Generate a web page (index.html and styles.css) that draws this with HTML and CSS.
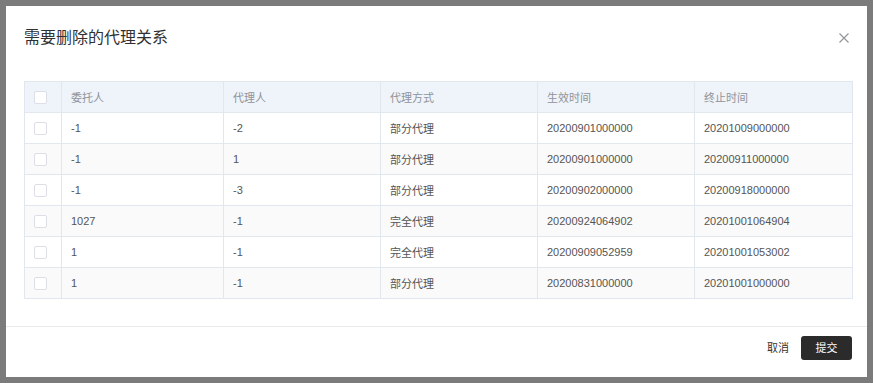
FILE: index.html
```html
<!DOCTYPE html>
<html>
<head>
    <title>需要删除的代理关系</title>
    <link rel="stylesheet" href="styles.css">
</head>
<body>
    <div class="mask">
        <div class="dialog">
            <div class="dialog-header">
                <span class="dialog-title">需要删除的代理关系</span>
                <button class="dialog-close" aria-label="Close">
                    <svg width="10" height="10" viewBox="0 0 10 10"><path d="M0.5 0.5L9.5 9.5M9.5 0.5L0.5 9.5" stroke="#909399" stroke-width="1.1" fill="none"/></svg>
                </button>
            </div>
            <div class="dialog-body">
                <table class="agent-table">
                    <colgroup>
                        <col style="width:37px">
                        <col style="width:162px">
                        <col style="width:157px">
                        <col style="width:157px">
                        <col style="width:157px">
                        <col style="width:158px">
                    </colgroup>
                    <thead>
                        <tr>
                            <th><span class="checkbox"></span></th>
                            <th>委托人</th>
                            <th>代理人</th>
                            <th>代理方式</th>
                            <th>生效时间</th>
                            <th>终止时间</th>
                        </tr>
                    </thead>
                    <tbody>
                        <tr>
                            <td><span class="checkbox"></span></td>
                            <td>-1</td><td>-2</td><td>部分代理</td>
                            <td>20200901000000</td><td>20201009000000</td>
                        </tr>
                        <tr>
                            <td><span class="checkbox"></span></td>
                            <td>-1</td><td>1</td><td>部分代理</td>
                            <td>20200901000000</td><td>20200911000000</td>
                        </tr>
                        <tr>
                            <td><span class="checkbox"></span></td>
                            <td>-1</td><td>-3</td><td>部分代理</td>
                            <td>20200902000000</td><td>20200918000000</td>
                        </tr>
                        <tr>
                            <td><span class="checkbox"></span></td>
                            <td>1027</td><td>-1</td><td>完全代理</td>
                            <td>20200924064902</td><td>20201001064904</td>
                        </tr>
                        <tr>
                            <td><span class="checkbox"></span></td>
                            <td>1</td><td>-1</td><td>完全代理</td>
                            <td>20200909052959</td><td>20201001053002</td>
                        </tr>
                        <tr>
                            <td><span class="checkbox"></span></td>
                            <td>1</td><td>-1</td><td>部分代理</td>
                            <td>20200831000000</td><td>20201001000000</td>
                        </tr>
                    </tbody>
                </table>
            </div>
            <div class="dialog-footer">
                <button class="btn btn-text">取消</button>
                <button class="btn btn-dark">提交</button>
            </div>
        </div>
    </div>
</body>
</html>
```

FILE: styles.css
```css
html, body {
    margin: 0;
    padding: 0;
    height: 100%;
}
body {
    font-family: "Liberation Sans", "Noto Sans CJK SC", sans-serif;
    background: #7b7b7b;
    color: #555;
}
.mask {
    padding: 6px;
    box-sizing: border-box;
    height: 100%;
}
.dialog {
    width: 861px;
    height: 371px;
    background: #fff;
    box-sizing: border-box;
    display: flex;
    flex-direction: column;
}
.dialog-header {
    display: flex;
    justify-content: space-between;
    align-items: center;
    padding: 20px 18px 0 18px;
    height: 24px;
}
.dialog-title {
    font-size: 16px;
    line-height: 24px;
    color: #303133;
}
.dialog-close {
    border: none;
    background: none;
    padding: 0;
    width: 10px;
    height: 10px;
    display: flex;
    cursor: pointer;
}
.dialog-body {
    padding: 31px 15px 0 18px;
    flex: 1;
}
.agent-table {
    border-collapse: collapse;
    table-layout: fixed;
    width: 828px;
    font-size: 11px;
}
.agent-table th,
.agent-table td {
    border: 1px solid #e1e7ef;
    height: 31px;
    padding: 0 9px;
    box-sizing: border-box;
    text-align: left;
    white-space: nowrap;
}
.agent-table th {
    background: #eff3fa;
    color: #909399;
    font-weight: normal;
}
.agent-table tbody tr:nth-child(even) td {
    background: #fafafa;
}
.checkbox {
    display: block;
    width: 11px;
    height: 11px;
    border: 1px solid #dcdfe6;
    border-radius: 2px;
    background: #fff;
}
.dialog-footer {
    border-top: 1px solid #ebebeb;
    padding: 9px 15px 17px 0;
    display: flex;
    justify-content: flex-end;
    align-items: center;
    gap: 12px;
}
.btn {
    font-family: inherit;
    font-size: 11px;
    border: none;
    cursor: pointer;
    height: 24px;
    line-height: 24px;
}
.btn-text {
    background: none;
    color: #333;
    padding: 0;
}
.btn-dark {
    background: #2b2b2b;
    color: #fff;
    width: 51px;
    padding: 0;
    border-radius: 3px;
}
```
